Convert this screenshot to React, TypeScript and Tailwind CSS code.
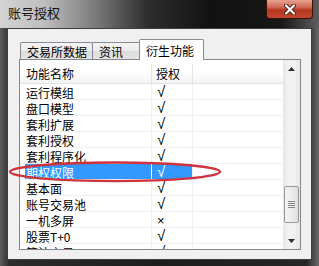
import React from "react";

interface Row {
  name: string;
  ok: boolean;
}

const rows: Row[] = [
  { name: "运行模组", ok: true },
  { name: "盘口模型", ok: true },
  { name: "套利扩展", ok: true },
  { name: "套利授权", ok: true },
  { name: "套利程序化", ok: true },
  { name: "期权权限", ok: true },
  { name: "基本面", ok: true },
  { name: "账号交易池", ok: true },
  { name: "一机多屏", ok: false },
  { name: "股票T+0", ok: true },
  { name: "算法交易", ok: true },
];

const SELECTED = 5;

const CloseButton = () => (
  <div className="mr-[6px] flex h-[19px] w-[47px] items-center justify-center rounded-b-[4px] border border-t-0 border-[#3a120c] bg-[linear-gradient(180deg,#e7a08f_0%,#d06a55_40%,#b4361f_55%,#c2472f_100%)]">
    <svg width="12" height="11" viewBox="0 0 12 11">
      <path d="M2 1.5 L10 9.5 M10 1.5 L2 9.5" stroke="#5a1c14" strokeWidth="4" strokeLinecap="round" />
      <path d="M2 1.5 L10 9.5 M10 1.5 L2 9.5" stroke="#ffffff" strokeWidth="2.2" strokeLinecap="round" />
    </svg>
  </div>
);

const Tab = ({ label, width, active }: { label: string; width: string; active?: boolean }) => {
  if (active) {
    return (
      <div
        className={`relative z-10 -mb-[1px] -ml-[2px] h-[21px] ${width} rounded-t-[2px] border border-b-0 border-[#898c95] bg-white pl-[6px] pt-[3px] leading-[16px]`}
      >
        {label}
      </div>
    );
  }
  return (
    <div
      className={`-ml-[1px] h-[17px] ${width} rounded-t-[2px] border border-b-0 border-[#898c95] bg-[linear-gradient(180deg,#f4f4f4_0%,#ebebeb_50%,#dcdcdc_51%,#e4e4e4_100%)] pl-[6px] pt-[1px] leading-[16px] first:ml-[1px]`}
    >
      {label}
    </div>
  );
};

const ScrollBar = () => (
  <div className="flex w-[17px] flex-col items-center bg-[linear-gradient(90deg,#e6e6e6_0%,#f2f2f2_30%,#f2f2f2_70%,#e6e6e6_100%)]">
    <div className="flex h-[17px] w-full items-center justify-center">
      <svg width="7" height="4" viewBox="0 0 7 4">
        <path d="M3.5 0 L7 4 L0 4 Z" fill="#2c2c2c" />
      </svg>
    </div>
    <div className="h-[109px]" />
    <div className="flex h-[37px] w-[15px] items-center justify-center rounded-[2px] border border-[#979797] bg-[linear-gradient(90deg,#f4f4f4_0%,#ececec_50%,#dedede_100%)]">
      <div className="flex flex-col gap-[1px]">
        <div className="h-[1px] w-[7px] bg-[#8a8a8a]" />
        <div className="h-[1px] w-[7px] bg-[#8a8a8a]" />
        <div className="h-[1px] w-[7px] bg-[#8a8a8a]" />
        <div className="h-[1px] w-[7px] bg-[#8a8a8a]" />
      </div>
    </div>
    <div className="flex-1" />
    <div className="flex h-[17px] w-full items-center justify-center">
      <svg width="7" height="4" viewBox="0 0 7 4">
        <path d="M0 0 L7 0 L3.5 4 Z" fill="#2c2c2c" />
      </svg>
    </div>
  </div>
);

const ListRow = ({ row, selected }: { row: Row; selected: boolean }) => (
  <div className="flex h-[16px] shrink-0 border-b border-[#f0f0f0] leading-[16px]">
    <div className={`flex w-[132px] border-r ${selected ? "border-white" : "border-[#f0f0f0]"} pl-[5px]`}>
      <div className={`flex-1 pl-[1px] pt-[1px] ${selected ? "bg-[#3399ff] text-white" : ""}`}>{row.name}</div>
    </div>
    <div
      className={`w-[41px] border-r border-[#f0f0f0] pl-[5px] font-['Liberation_Sans',sans-serif] ${
        row.ok ? "text-[15px] leading-[16px]" : "pt-[1px] text-[13px] leading-[15px]"
      } ${selected ? "bg-[#3399ff] text-white" : ""}`}
    >
      {row.ok ? "√" : "×"}
    </div>
    <div className="flex-1" />
  </div>
);

export default function App() {
  return (
    <div className="relative h-[266px] w-[319px] overflow-hidden bg-[linear-gradient(90deg,#5c5c5c_0%,#2c2c2c_3%,#1c1c1c_50%,#262626_96%,#6a6a6a_100%)] font-['Noto_Sans_CJK_SC',sans-serif] text-[12px] text-black">
      <div className="flex h-[28px] items-start justify-between bg-[linear-gradient(90deg,#d4d4d4_0%,#bdbdbd_14%,#7a7a7a_30%,#2e2e2e_46%,#121212_66%,#161616_88%,#5e5e5e_100%)]">
        <div className="pl-[8px] pt-[5px] text-[13px] leading-[16px] text-[#111]">账号授权</div>
        <CloseButton />
      </div>

      <div className="mx-[7px] h-[232px] border border-[#3e3e3e] bg-[#f0f0f0] pl-[11px] pr-[10px] pt-[10px]">
        <div className="flex h-[20px] items-end">
          <Tab label="交易所数据" width="w-[73px]" />
          <Tab label="资讯" width="w-[49px]" />
          <Tab label="衍生功能" width="w-[65px]" active />
        </div>

        <div className="flex h-[191px] border border-[#828790] bg-white">
          <div className="flex w-[263px] flex-col overflow-hidden">
            <div className="flex h-[24px] shrink-0 border-b border-[#e5e5e5] bg-[linear-gradient(180deg,#ffffff_0%,#ffffff_50%,#f3f4f6_100%)] pt-[4px] leading-[19px]">
              <div className="w-[132px] border-r border-[#e5e5e5] pl-[6px]">功能名称</div>
              <div className="w-[41px] border-r border-[#e5e5e5] pl-[4px]">授权</div>
              <div className="flex-1" />
            </div>
            {rows.map((row, i) => (
              <ListRow key={row.name} row={row} selected={i === SELECTED} />
            ))}
          </div>
          <ScrollBar />
        </div>
      </div>

      <svg className="pointer-events-none absolute left-0 top-0" width="319" height="266">
        <ellipse cx="115" cy="171.8" rx="105" ry="9.3" fill="none" stroke="#cf3340" strokeWidth="2.4" />
      </svg>
    </div>
  );
}
